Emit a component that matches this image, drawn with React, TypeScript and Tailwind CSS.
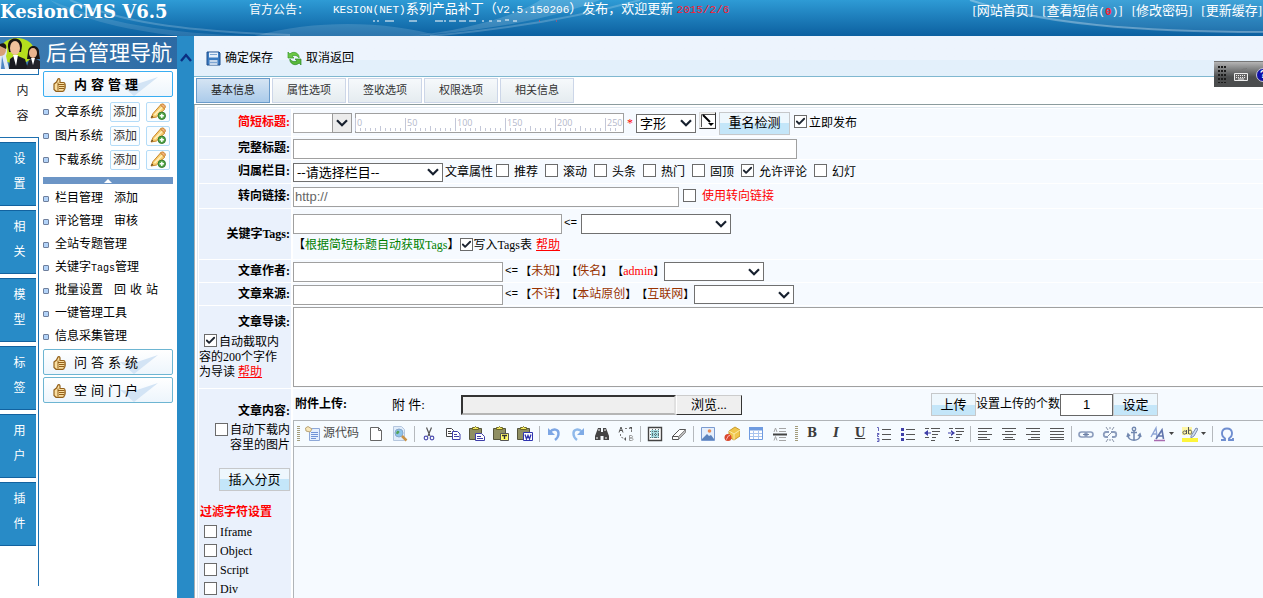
import { useState } from "react";
import type { ReactNode } from "react";
import { Check } from "lucide-react";

type MenuItem = {
  label: ReactNode;
  extra?: string;
};

const sideTabs = ["设置", "相关", "模型", "标签", "用户", "插件"];

const systems = ["文章系统", "图片系统", "下载系统"];

const menuItems: MenuItem[] = [
  { label: "栏目管理", extra: "添加" },
  { label: "评论管理", extra: "审核" },
  { label: "全站专题管理" },
  {
    label: (
      <>
        关键字<span className="font-['Liberation_Mono',monospace] text-[10px]">Tags</span>管理
      </>
    ),
  },
  { label: "批量设置", extra: "回 收 站" },
  { label: "一键管理工具" },
  { label: "信息采集管理" },
];

const formTabs = ["基本信息", "属性选项", "签收选项", "权限选项", "相关信息"];

const attributes = [
  { label: "推荐", checked: false },
  { label: "滚动", checked: false },
  { label: "头条", checked: false },
  { label: "热门", checked: false },
  { label: "固顶", checked: false },
  { label: "允许评论", checked: true },
  { label: "幻灯", checked: false },
];

const filters = ["Iframe", "Object", "Script", "Div"];

function Checkbox({ id, checked = false }: { id: string; checked?: boolean }) {
  return (
    <span className="relative mb-[3px] block h-[13px] w-[13px] shrink-0">
      <input
        id={id}
        type="checkbox"
        defaultChecked={checked}
        className="peer block h-[13px] w-[13px] appearance-none border border-[#6b6b6b] bg-white"
      />
      <Check
        strokeWidth={4}
        className="pointer-events-none absolute top-px left-px hidden h-[11px] w-[11px] text-[#1c2430] peer-checked:block"
      />
    </span>
  );
}

function Select({
  label,
  text = "",
  className,
  boxed = false,
}: {
  label: string;
  text?: string;
  className: string;
  boxed?: boolean;
}) {
  return (
    <span className={`relative block shrink-0 ${className}`}>
      <select
        aria-label={label}
        className={`block h-full w-full appearance-none border bg-white pl-[3px] text-[13px] leading-none ${
          boxed ? "border-[#a9a9a9]" : "border-[#707070]"
        }`}
      >
        <option>{text}</option>
      </select>
      <span
        className={`pointer-events-none absolute top-0 right-0 flex h-full w-5 items-center justify-center ${
          boxed ? "border border-[#9a9a9a] bg-[#ececec]" : ""
        }`}
      >
        <svg width="12" height="8" viewBox="0 0 12 8">
          <path d="M1 1.2 6 6.2 11 1.2" fill="none" stroke="#17202e" strokeWidth="2.2" />
        </svg>
      </span>
    </span>
  );
}

function PushButton({ children, className }: { children: ReactNode; className: string }) {
  return (
    <button
      type="button"
      className={`flex h-[23px] shrink-0 items-center justify-center border border-[#c6c8ca] bg-linear-to-b from-[#eef7fd] from-50% to-[#c4e6f9] to-50% pb-px text-[13px] leading-none ${className}`}
    >
      {children}
    </button>
  );
}

function FormRow({
  label,
  height,
  required = false,
  children,
}: {
  label: string;
  height: string;
  required?: boolean;
  children: ReactNode;
}) {
  return (
    <div className={`flex gap-[2px] border-t border-white ${height}`}>
      <div
        className={`flex w-[92px] shrink-0 items-center justify-end bg-[#eaf1fc] pr-px font-bold ${
          required ? "text-[#ff0000]" : ""
        }`}
      >
        {label}
      </div>
      <div className="flex min-w-0 flex-1 items-center bg-[#f6faff] pt-px">{children}</div>
    </div>
  );
}

function Arrow() {
  return <span className="mx-[2px] font-['Liberation_Mono',monospace] text-[11px]">{"<="}</span>;
}

function Choice({ children, red = false }: { children: string; red?: boolean }) {
  return (
    <span className="flex items-center whitespace-nowrap">
      <span className="text-[11px]">【</span>
      <a href="#" className={red ? "text-[#ff0000]" : "text-[#993300]"}>
        {children}
      </a>
      <span className="text-[11px]">】</span>
    </span>
  );
}

function Ruler() {
  const ticks = Array.from({ length: 53 }, (_, i) => i);
  return (
    <svg className="pointer-events-none absolute top-px left-0" width="268" height="18">
      {ticks.map((i) => {
        const top = i % 10 === 0 ? 4 : i % 5 === 0 ? 12 : 14;
        return <path key={i} d={`M${i * 5 + 0.5} ${top}V17`} stroke="#c3c7d8" />;
      })}
      {[0, 50, 100, 150, 200, 250].map((n) => (
        <text
          key={n}
          x={n + 2}
          y="12"
          fontSize="9"
          fontFamily="Open Sans, sans-serif"
          fill="#b4b8cb"
        >
          {n}
        </text>
      ))}
    </svg>
  );
}

function ThumbIcon() {
  return (
    <svg width="13" height="14" viewBox="0 0 13 14">
      <path
        d="M1 6 3.500 4 5 .9C6 .2 7 .8 7 2v2.500h3.500c1 0 1.500.8 1.300 1.600.6.500.6 1.400.1 1.900.5.500.5 1.400-.1 1.900.3.600.1 1.300-.5 1.700 0 1-.7 1.700-1.600 1.700H3L1 11.500Z"
        fill="#f9dea0"
        stroke="#93601a"
        strokeWidth="1.200"
      />
      <path d="M5 6.500h6.500M6 8.500h5.500M6 10.500h5M5 4.500v8" stroke="#93601a" />
    </svg>
  );
}

function PencilIcon() {
  return (
    <svg width="18" height="18" viewBox="0 0 18 18">
      <path d="M2 15 4 10.500 11.500 2 15.800 6 7.500 14Z" fill="#f8cf72" stroke="#c98528" />
      <path d="M5.500 12 13.500 4" stroke="#fff0bd" strokeWidth="1.600" />
      <path d="m11.500 2 1-1c1.900-.6 4.200 1.400 3.800 3.200l-1 1.500Z" fill="#f1b07e" stroke="#c98528" />
      <path d="M2 15 3 12.600 4.400 14Z" fill="#57401c" />
      <circle cx="12.800" cy="12.800" r="3.700" fill="#55a84a" stroke="#33782c" />
      <path d="M12.800 10.700v4.200M10.700 12.800h4.200" stroke="#fff" strokeWidth="1.400" />
    </svg>
  );
}

function Bullet() {
  return (
    <span className="mr-[6px] block h-[6px] w-[6px] shrink-0 rounded-[1px] border border-[#6f7f9c] bg-[#b3d3f8]" />
  );
}

function SpacedText({ text }: { text: string }) {
  return (
    <span className="flex gap-[4px]">
      {text.split(" ").map((char) => (
        <span key={char}>{char}</span>
      ))}
    </span>
  );
}

function NavButton({ children, active = false }: { children: string; active?: boolean }) {
  return (
    <button
      type="button"
      className={`relative flex h-[26px] w-full items-center rounded-[2px] border bg-linear-to-b from-white to-[#edf5fc] pl-[9px] text-[13px] ${
        active ? "border-[#3aaef2] font-bold" : "border-[#6db5d2]"
      }`}
    >
      <svg className="absolute top-[5px] right-[14px]" width="38" height="19" viewBox="0 0 38 19">
        <path d="M0 7 14 19 38 0 14 8Z" fill="#d3e4f5" />
      </svg>
      <span className="relative flex items-center gap-2 pt-px">
        <ThumbIcon />
        <SpacedText text={children} />
      </span>
    </button>
  );
}

function Sidebar() {
  return (
    <aside className="flex w-[177px] shrink-0 flex-col bg-white">
      <div className="flex h-[33px] shrink-0 items-center border-t border-white bg-linear-to-r from-[#3f7fb4] to-[#2c6aa4]">
        <svg width="40" height="32" viewBox="0 0 40 32" className="shrink-0">
          <ellipse cx="17" cy="14" rx="17" ry="13" fill="#b5df1d" />
          <path d="M0 9c5-3 9 3 6 10L9 32H0Z" fill="#dfe9f5" />
          <ellipse cx="1" cy="13" rx="5" ry="6" fill="#d8a078" />
          <path d="M0 7c5-2 7 1 6 5L0 9Z" fill="#201713" />
          <path d="m2 19 3 13H1Z" fill="#4f88c4" />
          <path d="M8 10C7-1 22-1 22 9l-1 6H9Z" fill="#1b1512" />
          <ellipse cx="15" cy="11" rx="5" ry="7" fill="#f0c09a" />
          <path d="M9 32 10 22l4-3h4l7 3 3 10Z" fill="#1a1a20" />
          <path d="m13 18 5 0-2 11Z" fill="#fff" />
          <path d="M28 15c0-8 12-8 11 1l1 6H27Z" fill="#1b1512" />
          <ellipse cx="33" cy="16" rx="4" ry="5" fill="#e8b48e" />
          <path d="m26 32 3-9 5-2 6 3v8Z" fill="#23232b" />
          <path d="m31 21 4 0-2 7Z" fill="#fff" />
        </svg>
        <h2 className="ml-[6px] text-[21px] leading-none whitespace-nowrap text-white">后台管理导航</h2>
      </div>

      <div className="flex min-h-0 flex-1">
        <div className="flex w-[39px] shrink-0 flex-col">
          <div className="h-[6px] shrink-0 border-r border-b border-[#1e70b0]" />
          <a href="#" className="flex h-[62px] shrink-0 flex-col items-center pt-1 pl-[6px] leading-[25px] text-[#222]">
            <span>内</span>
            <span>容</span>
          </a>
          <div className="mb-3 flex min-h-0 flex-1 flex-col gap-1 border-t border-r border-[#1e70b0] pt-1">
            {sideTabs.map((tab) => (
              <a
                key={tab}
                href="#"
                className="flex h-16 w-9 shrink-0 flex-col items-center border-y border-[#12629f] bg-[#288bc7] pt-1 pl-[3px] leading-[25px] text-white"
              >
                <span>{tab[0]}</span>
                <span>{tab[1]}</span>
              </a>
            ))}
          </div>
        </div>

        <nav className="min-w-0 flex-1 px-1 pt-[2px]">
          <NavButton active>内 容 管 理</NavButton>

          <div className="mt-[3px]">
            {systems.map((name) => (
              <div key={name} className="flex h-6 items-center">
                <Bullet />
                <a href="#" className="w-[55px] whitespace-nowrap">
                  {name}
                </a>
                <a
                  href="#"
                  className="flex h-5 w-[30px] items-center justify-center rounded-[2px] border border-[#b4dcf8] bg-[#fafdff] text-[#333]"
                >
                  添加
                </a>
                <a
                  href="#"
                  aria-label={name + "添加"}
                  className="ml-[6px] flex h-5 w-6 items-center justify-center rounded-[2px] border border-[#b4dcf8] bg-[#fafdff]"
                >
                  <PencilIcon />
                </a>
              </div>
            ))}
          </div>

          <div className="mt-[5px] flex h-[7px] items-center justify-center bg-[#6c95c6]">
            <svg width="8" height="4" viewBox="0 0 8 4">
              <path d="M0 4 4 0 8 4Z" fill="#fff" />
            </svg>
          </div>

          <ul className="mt-[3px] mb-px">
            {menuItems.map((item, index) => (
              <li key={index} className="flex h-[23px] items-center whitespace-nowrap">
                <Bullet />
                <a href="#">{item.label}</a>
                {item.extra && (
                  <a href="#" className="ml-[11px]">
                    <SpacedText text={item.extra} />
                  </a>
                )}
              </li>
            ))}
          </ul>

          <div className="flex flex-col gap-[2px]">
            <NavButton>问 答 系 统</NavButton>
            <NavButton>空 间 门 户</NavButton>
          </div>
        </nav>
      </div>
    </aside>
  );
}

function Header() {
  return (
    <header className="relative flex h-9 shrink-0 items-start overflow-hidden bg-linear-to-b from-[#2e9bd5] to-[#0c60a0] text-[13px] whitespace-nowrap text-white">
      <svg className="absolute top-0 left-0 h-full w-full" viewBox="0 0 1263 36" preserveAspectRatio="none">
        <path d="M50 0C100 22 170 34 255 36L180 36C120 30 70 16 50 0Z" fill="#fff" opacity=".12" />
        <path d="M70 0C120 22 180 31 290 35" fill="none" stroke="#fff" strokeWidth="2" opacity=".2" />
        <path d="M255 36C320 18 390 22 440 36Z" fill="#fff" opacity=".14" />
        <path d="M410 36C500 30 560 16 600 0L540 0C520 14 470 30 410 36Z" fill="#fff" opacity=".16" />
        <path d="M430 36C520 28 590 14 640 0" fill="none" stroke="#fff" strokeWidth="2" opacity=".2" />
        <path d="M970 0C1030 20 1110 32 1263 32V0Z" fill="#fff" opacity=".08" />
        <path d="M970 0C1040 24 1140 32 1263 32" fill="none" stroke="#fff" strokeWidth="2" opacity=".3" />
      </svg>
      <h1 className="relative w-[249px] font-['DejaVu_Serif',serif] text-[18px] leading-6 font-bold">
        KesionCMS V6.5
      </h1>
      <span className="relative w-[84px] text-[12px] leading-[20px]">官方公告：</span>
      <div className="relative">
        <p className="leading-[18px]">
          <span className="font-['Liberation_Mono',monospace] text-[11px]">KESION(NET)</span>
          系列产品补丁（
          <span className="font-['Liberation_Mono',monospace] text-[11px]">V2.5.150206</span>
          ）发布，欢迎更新{" "}
          <span className="font-['Liberation_Mono',monospace] text-[11px] text-[#ff1a2e]">2015/2/6</span>
        </p>
        {/* next announcement scrolling in */}
        <svg width="190" height="3" className="ml-[38px] block">
          <path
            d="M2 2h2M6 2h2M14 2h9M38 2h8M64 2h8M74 1v2M78 2h7M88 2h7M98 2h7M112 1v2M118 2h3M126 2h4M134 1h4M142 2h4"
            stroke="#fff"
          />
          <path d="M168 2h1M185 2h1" stroke="#ff4050" />
        </svg>
      </div>
      <nav className="relative ml-auto flex gap-[9px] pr-px leading-[21px]">
        <a href="#">[网站首页]</a>
        <a href="#">
          [查看短信<span className="font-['Liberation_Mono',monospace] text-[11px]">(</span>
          <b className="font-['Liberation_Mono',monospace] text-[11px] text-[#ff1a2e]">0</b>
          <span className="font-['Liberation_Mono',monospace] text-[11px]">)</span>]
        </a>
        <a href="#">[修改密码]</a>
        <a href="#">[更新缓存]</a>
      </nav>
    </header>
  );
}

function Tool({ label, children, wide = false }: { label: string; children: ReactNode; wide?: boolean }) {
  return (
    <button
      type="button"
      aria-label={label}
      className={`flex h-6 shrink-0 items-center justify-center ${wide ? "w-8 gap-[3px]" : "w-6"}`}
    >
      <svg width="16" height="16" viewBox="0 0 16 16" fill="none">
        {children}
      </svg>
      {wide && (
        <svg width="5" height="3" viewBox="0 0 5 3">
          <path d="M0 0h5L2.5 3Z" fill="#444" />
        </svg>
      )}
    </button>
  );
}

function Separator() {
  return (
    <span className="flex w-[5px] shrink-0 justify-center">
      <span className="block h-4 w-px bg-[#b5b9bd]" />
    </span>
  );
}

function Grip() {
  return (
    <span className="flex w-2 shrink-0 justify-center">
      <svg width="3" height="15" viewBox="0 0 3 15">
        <path d="M1.5 0V15" stroke="#a39c7c" strokeWidth="3" strokeDasharray="1 1" />
      </svg>
    </span>
  );
}

function Clipboard() {
  return (
    <>
      <path d="M.5 2.5h12v11H.5Z" fill="#8f8f63" stroke="#55553c" />
      <path d="M3.5 3.5v-2h2l1-1 1 1h2v2Z" fill="#f3e95d" stroke="#6b6622" />
    </>
  );
}

function EditorToolbar() {
  return (
    <div className="flex h-[26px] items-center overflow-hidden border-b border-[#b0b4b8] bg-[#f6fbff]">
      <Grip />
      <button type="button" className="flex w-[62px] shrink-0 items-center gap-[2px] pl-[3px] text-[#4a4a4a]">
        <svg width="16" height="16" viewBox="0 0 16 16" fill="none" className="shrink-0">
          <path d="M4.500 2.500h10v12h-10Z" fill="#e4efff" stroke="#8ea8d8" />
          <path d="M6 6.500h7M6 8.500h7M6 10.500h7M6 12.500h5" stroke="#6f92d6" />
          <path d="M.5 2 3 .5l4 2.500-2 3-4-1Z" fill="#f8e7bb" stroke="#b9a477" />
        </svg>
        <span className="whitespace-nowrap">源代码</span>
      </button>
      <Tool label="新建">
        <path d="M2.500 1.500h8l3 3v10h-11Z" fill="#fff" stroke="#666" />
        <path d="M10.500 1.500v3h3" stroke="#666" />
      </Tool>
      <Tool label="预览">
        <path d="M1.500.5h8l3 3v11h-11Z" fill="#e0ecfa" stroke="#b4c6de" />
        <circle cx="7" cy="7" r="4" fill="#8fc4ea" stroke="#86a8cc" />
        <path d="M5 5c2-1 3 1 2 2s-2 2-3 0Z" fill="#54a35a" />
        <path d="m10 10 4.500 4.500" stroke="#c99347" strokeWidth="2.500" />
      </Tool>
      <Separator />
      <Tool label="剪切">
        <path d="M5.500 1.500 9 10M10.500 1.500 7 10" stroke="#555" strokeWidth="1.200" />
        <circle cx="5" cy="12" r="1.800" stroke="#4f4fb0" strokeWidth="1.200" />
        <circle cx="11" cy="12" r="1.800" stroke="#4f4fb0" strokeWidth="1.200" />
      </Tool>
      <Tool label="复制">
        <path d="M1.500 2.500h5l2 2v6h-7Z" fill="#fff" stroke="#444" />
        <path d="M3 5.500h3M3 7.500h4" stroke="#444" />
        <path d="M7.500 5.500h5l2.500 2.500v5.500H7.500Z" fill="#fff" stroke="#3f3fa8" />
        <path d="M9 8.500h3M9 10.500h5" stroke="#3f3fa8" />
      </Tool>
      <Tool label="粘贴">
        <Clipboard />
        <path d="M6.500 7.500h6l3 3v4h-9Z" fill="#fff" stroke="#3f3fa8" />
        <path d="M8 10.500h4M8 12.500h6" stroke="#3f3fa8" />
      </Tool>
      <Tool label="粘贴为无格式文本">
        <Clipboard />
        <path d="M7.500 7.500h8v7h-8Z" fill="#fff96a" stroke="#555" />
        <path d="M9 9.500h5M11.500 9v4" stroke="#333" strokeWidth="1.400" />
      </Tool>
      <Tool label="从 Word 粘贴">
        <Clipboard />
        <path d="M6.500 6.500h9v8h-9Z" fill="#fff" stroke="#2f35b0" />
        <path d="m8 8.500 1.500 4.500L11 9.500l1.500 3.500L14 8.500" stroke="#2f35b0" strokeWidth="1.300" />
      </Tool>
      <Separator />
      <Tool label="撤销">
        <path d="M4 6C7 2 13 3 12.500 8c0 2-1 4-3.500 6" stroke="#7da6e4" strokeWidth="2.400" />
        <path d="M2 2v7h7Z" fill="#7da6e4" />
      </Tool>
      <Tool label="重做">
        <path d="M12 6C9 2 3 3 3.500 8c0 2 1 4 3.500 6" stroke="#8fb9ea" strokeWidth="2.400" />
        <path d="M14 2v7H7Z" fill="#7fabe6" />
      </Tool>
      <Tool label="查找">
        <path d="M4 2h3v4h2V2h3l3 8v4h-5.500v-4h-3v4H1v-4Z" fill="#444" />
        <path d="M3 11v2M12 11v2M5 3v2M11 3v2" stroke="#fff" />
      </Tool>
      <Tool label="替换">
        <path d="M1 6.500 3 1l2 5.500M1.800 4.500h2.400" stroke="#555" />
        <path d="M11.500 9.500v5h2c2 0 2-2.500 0-2.500h-2 1.500c2 0 2-2.500 0-2.500Z" stroke="#999" />
        <path d="M7 2.500h5M13.500 4v4M2.500 8v3l5 2" stroke="#777" strokeDasharray="2 2" />
        <path d="M11 1h3v3ZM8 11v4l-2-2Z" fill="#555" />
      </Tool>
      <Separator />
      <Tool label="全选">
        <path d="M1.500 1.500h13v13h-13Z" fill="#fff" stroke="#444" strokeWidth="1.400" />
        <path d="M4 4h8v8H4Z" fill="#a5dbe0" />
        <path d="M3 5.500h10M3 8.500h10M3 11.500h10M5.500 3v10M8.500 3v10M11.500 3v10" stroke="#5b7378" strokeDasharray="1 1" />
      </Tool>
      <Tool label="清除格式">
        <path d="m1.500 10.500 7-7h6v3l-7 7h-6Z" fill="#fff" stroke="#555" />
        <path d="m1.500 10.500h6l7-7M7.500 10.500v3" stroke="#555" />
        <path d="M7.500 10.500l7-7v3l-7 7Z" fill="#bbb" />
      </Tool>
      <Separator />
      <Tool label="图像">
        <path d="M1.500 1.500h13v13h-13Z" fill="#e5effc" stroke="#7b9bd0" />
        <path d="m2 13 5-5 2 2 2-1 3 4v1H2Z" fill="#5b83bd" />
        <circle cx="9.500" cy="5" r="1.800" fill="#e98a55" />
      </Tool>
      <Tool label="Flash">
        <path d="m5 5 6-4 5 3v6l-6 4-5-3Z" fill="#f0c64c" stroke="#c99a2c" />
        <path d="m5 5 5 3 6-4M10 8v6" stroke="#fbe9a6" />
        <circle cx="4" cy="11.500" r="3.500" fill="#d9472c" />
        <path d="M6 9.500C3 9 4 13 2 13.500" stroke="#fbb" />
      </Tool>
      <Tool label="表格">
        <path d="M1.500 1.500h13v12h-13Z" fill="#fff" stroke="#6f9be0" />
        <path d="M1 1h14v3.500H1Z" fill="#6f9be0" />
        <path d="M2 7.500h12M2 10.500h12M5.500 5v8M10.500 5v8" stroke="#a9c4ee" />
      </Tool>
      <Tool label="水平线">
        <path d="M1 8.500h14" stroke="#444" strokeWidth="2" />
        <path d="m2 6 1.500-4L5 6M2 14.500l1.500-4 1.500 4M7 2.500h7M7 5.500h7M7 11.500h7M7 14.500h7" stroke="#a5a5a5" />
      </Tool>
      <Grip />
      <button type="button" aria-label="加粗" className="w-6 shrink-0 font-['DejaVu_Serif',serif] text-[12px] font-bold text-[#3c3c3c]">
        B
      </button>
      <button type="button" aria-label="倾斜" className="w-6 shrink-0 font-['DejaVu_Serif',serif] text-[12px] font-bold text-[#3c3c3c] italic">
        I
      </button>
      <button type="button" aria-label="下划线" className="w-6 shrink-0 font-['DejaVu_Serif',serif] text-[12px] font-bold text-[#3c3c3c] underline">
        U
      </button>
      <Tool label="编号列表">
        <path d="M6 3.500h9M6 8.500h9M6 13.500h9" stroke="#555" />
        <path d="M1 1.500h1.500V5M1 7.500h2v1H1.500v2H3M1 12.500h2v3H1M1.500 14H3" stroke="#6464bb" />
      </Tool>
      <Tool label="项目列表">
        <path d="M6 3.500h9M6 8.500h9M6 13.500h9" stroke="#555" />
        <path d="M1 2h3v3H1ZM1 7h3v3H1ZM1 12h3v3H1Z" fill="#3f3fa8" />
      </Tool>
      <Tool label="减少缩进">
        <path d="M7 2.500h9M8 5.500h8M8 8.500h6M8 11.500h4M7 14.500h4M1 2.500h4M1 11.500h4" stroke="#555" strokeWidth="1.200" />
        <path d="M4 4v6L0 7ZM3 6.400h4v1.200H3Z" fill="#3f3fa8" />
      </Tool>
      <Tool label="增加缩进">
        <path d="M7 2.500h9M8 5.500h8M8 8.500h6M8 11.500h4M7 14.500h4M1 2.500h4M1 11.500h4" stroke="#555" strokeWidth="1.200" />
        <path d="M3 4v6l4-3ZM0 6.400h4v1.200H0Z" fill="#3f3fa8" />
      </Tool>
      <Separator />
      <Tool label="左对齐">
        <path d="M1 2.500h14M1 5.500h9M1 8.500h14M1 11.500h9M1 13.500h12" stroke="#555" />
      </Tool>
      <Tool label="居中">
        <path d="M1 2.500h14M4 5.500h8M1 8.500h14M4 11.500h8M2 13.500h12" stroke="#555" />
      </Tool>
      <Tool label="右对齐">
        <path d="M1 2.500h14M6 5.500h9M1 8.500h14M6 11.500h9M3 13.500h12" stroke="#555" />
      </Tool>
      <Tool label="两端对齐">
        <path d="M1 2.500h14M1 5.500h14M1 8.500h14M1 11.500h14M1 13.500h14" stroke="#555" />
      </Tool>
      <Separator />
      <Tool label="超链接">
        <rect x="1" y="6" width="8" height="5" rx="2.500" stroke="#8c9dbd" strokeWidth="1.600" />
        <rect x="7" y="6" width="8" height="5" rx="2.500" stroke="#8c9dbd" strokeWidth="1.600" />
        <path d="M5 8.500h6" stroke="#6f82a6" />
      </Tool>
      <Tool label="取消超链接">
        <path d="M7 6H4C1 6 1 11 4 11h2M9 6h3c3 0 3 5 0 5h-2" stroke="#8c9dbd" strokeWidth="1.800" />
        <path d="m4 1 2 3M12 1l-2 3M8 1v2M4 16l2-3M12 16l-2-3M8 15v-2M6 10l4-4" stroke="#8a94a8" />
      </Tool>
      <Tool label="锚点">
        <circle cx="8" cy="3" r="1.700" stroke="#7288b0" strokeWidth="1.400" />
        <path d="M8 5v9M5 6.500h6M2 9c0 7 12 7 12 0M1 11l1-3 2 2M15 11l-1-3-2 2" stroke="#7288b0" strokeWidth="1.500" />
      </Tool>
      <Tool label="文本颜色" wide>
        <path d="m1 11 5-9 1 9M3 8h4" stroke="#8fa6d6" strokeWidth="1.400" />
        <path d="m6 13 6-9 1.500 9M8.500 10H13" stroke="#6175ad" strokeWidth="1.600" />
        <path d="M4 14.500h11" stroke="#a96bb0" strokeWidth="1.500" />
      </Tool>
      <Tool label="背景颜色" wide>
        <path d="M0 1h10v8H0Z" fill="#fdf6a6" />
        <path d="M4.500 4v4M4.500 6C3 4 .5 5 1 7s3 1 3.500-.5M6.500 1v7M6.500 5c2-2 4 0 3 2s-2 1-3 0" stroke="#555" />
        <path d="m9 10 5-8 2 1-4 7-3 2Z" fill="#cfdcf1" stroke="#7c8db0" />
        <path d="M0 12h16v4H0Z" fill="#fdf53c" />
      </Tool>
      <Separator />
      <Tool label="特殊符号">
        <path d="M2 14h4v-1.500C1.500 9.500 2 2.500 8 2.500s6.500 7 2 10V14h4v-2" stroke="#6f8ed0" strokeWidth="1.900" />
      </Tool>
    </div>
  );
}

function ArticleForm() {
  return (
    <form className="flex min-h-0 flex-1 flex-col border-l border-[#a8b0b4] bg-white">
      <div className="mt-[2px] ml-[2px] flex min-h-0 flex-1 flex-col border-t border-l border-[#dfe8f0] pl-px">
        <FormRow label="简短标题:" height="h-[28px] shrink-0" required>
          <Select label="标题前缀" className="h-5 w-[59px]" boxed />
          <span className="relative ml-[3px] block">
            <input aria-label="简短标题" className="block h-5 w-[269px] border border-[#a0a0a0] bg-white px-1" />
            <Ruler />
          </span>
          <span className="mx-[3px] text-[#ff0000]">*</span>
          <Select label="字形" text="字形" className="h-[19px] w-[60px]" />
          <button
            type="button"
            aria-label="标题颜色"
            className="mx-[3px] mb-[6px] flex h-[17px] w-[17px] items-center justify-center border border-t-[#ddd] border-r-[#333] border-b-[#333] border-l-[#ddd] bg-[#f4f2ee]"
          >
            <svg width="14" height="13" viewBox="0 0 14 13">
              <path d="M0 0h14v13H0Z" fill="#fff" />
              <path d="M.5 13V.5H14" fill="none" stroke="#555" />
              <path d="m2 1 7 7" stroke="#000" strokeWidth="2" />
              <path d="M7 9h6l-3 3Z" fill="#000" />
            </svg>
          </button>
          <PushButton className="w-[71px]">重名检测</PushButton>
          <span className="ml-1 flex items-center gap-[2px]">
            <Checkbox id="publish" checked />
            <label htmlFor="publish">立即发布</label>
          </span>
        </FormRow>

        <FormRow label="完整标题:" height="h-[23px] shrink-0">
          <input aria-label="完整标题" className="h-5 w-[504px] border border-[#a0a0a0] bg-white px-1" />
        </FormRow>

        <FormRow label="归属栏目:" height="h-[24px] shrink-0">
          <Select label="归属栏目" text="--请选择栏目--" className="h-[19px] w-[150px]" />
          <span className="mr-[3px] ml-[2px] whitespace-nowrap">文章属性</span>
          <div className="flex gap-[7px]">
            {attributes.map((item) => (
              <span key={item.label} className="flex items-center gap-[5px]">
                <Checkbox id={item.label} checked={item.checked} />
                <label htmlFor={item.label} className="whitespace-nowrap">
                  {item.label}
                </label>
              </span>
            ))}
          </div>
        </FormRow>

        <FormRow label="转向链接:" height="h-[25px] shrink-0">
          <input
            aria-label="转向链接"
            defaultValue="http://"
            className="h-5 w-[386px] border border-[#a0a0a0] bg-white px-px font-['Liberation_Sans',sans-serif] text-[13px] text-[#666]"
          />
          <span className="ml-1 flex items-center gap-[6px] text-[#ff0000]">
            <Checkbox id="redirect" />
            <label htmlFor="redirect">使用转向链接</label>
          </span>
        </FormRow>

        <FormRow label="关键字Tags:" height="h-[51px] shrink-0">
          <div className="flex flex-col gap-[2px]">
            <div className="flex items-center">
              <input aria-label="关键字Tags" className="h-5 w-[269px] border border-[#a0a0a0] bg-white px-1" />
              <Arrow />
              <Select label="常用Tags" className="ml-[2px] h-5 w-[150px]" />
            </div>
            <div className="flex h-5 items-center">
              <span>
                【
                <a href="#" className="text-[#008000]">
                  根据简短标题自动获取Tags
                </a>
                】
              </span>
              <span className="mr-1 flex items-center gap-px">
                <Checkbox id="writeTags" checked />
                <label htmlFor="writeTags">写入Tags表</label>
              </span>
              <a href="#" className="text-[#ff0000] underline">
                帮助
              </a>
            </div>
          </div>
        </FormRow>

        <FormRow label="文章作者:" height="h-[23px] shrink-0">
          <input aria-label="文章作者" className="h-5 w-[210px] border border-[#a0a0a0] bg-white px-1" />
          <Arrow />
          <Choice>未知</Choice>
          <Choice>佚名</Choice>
          <Choice red>admin</Choice>
          <Select label="选择作者" className="h-[19px] w-[100px]" />
        </FormRow>

        <FormRow label="文章来源:" height="h-[23px] shrink-0">
          <input aria-label="文章来源" className="h-5 w-[210px] border border-[#a0a0a0] bg-white px-1" />
          <Arrow />
          <Choice>不详</Choice>
          <Choice>本站原创</Choice>
          <Choice>互联网</Choice>
          <Select label="选择来源" className="h-[19px] w-[100px]" />
        </FormRow>

        {/* Summary */}
        <div className="flex h-[83px] shrink-0 gap-[2px] border-t border-white">
          <div className="w-[92px] shrink-0 bg-[#eaf1fc] pt-[9px] leading-[15px]">
            <p className="mb-1 pr-px text-right font-bold">文章导读:</p>
            <span className="flex items-center gap-[2px] pl-[5px] whitespace-nowrap">
              <Checkbox id="autoIntro" checked />
              <label htmlFor="autoIntro">自动截取内</label>
            </span>
            <p className="whitespace-nowrap">容的200个字作</p>
            <p>
              为导读{" "}
              <a href="#" className="text-[#ff0000] underline">
                帮助
              </a>
            </p>
          </div>
          <div className="flex min-w-0 flex-1 bg-[#f6faff] py-px">
            <textarea
              aria-label="文章导读"
              className="block h-20 w-full resize-none border border-r-0 border-[#a0a0a0] bg-white p-1"
            />
          </div>
        </div>

        {/* Content */}
        <div className="flex min-h-0 flex-1 gap-[2px] border-t border-white">
          <div className="w-[92px] shrink-0 bg-[#eaf1fc] pt-[15px] leading-[15px]">
            <p className="pr-px text-right font-bold">文章内容:</p>
            <div className="mt-1 flex items-start justify-end gap-[2px] pr-px">
              <Checkbox id="autoDownload" />
              <label htmlFor="autoDownload" className="whitespace-nowrap">
                自动下载内
                <br />
                容里的图片
              </label>
            </div>
            <PushButton className="mt-[15px] ml-5 w-[71px]">插入分页</PushButton>
            <p className="mt-[14px] mb-[3px] pl-px font-bold whitespace-nowrap text-[#ff0000]">过滤字符设置</p>
            {filters.map((name) => (
              <span key={name} className="flex h-[19px] items-center gap-[3px] pl-[5px]">
                <Checkbox id={name} />
                <label htmlFor={name}>{name}</label>
              </span>
            ))}
          </div>

          <div className="flex min-w-0 flex-1 flex-col bg-[#f6faff]">
            <div className="flex h-[31px] shrink-0 items-center">
              <span className="w-[99px] pl-[2px] font-bold whitespace-nowrap">附件上传:</span>
              <span className="w-[69px] text-[13px] whitespace-nowrap">附 件:</span>
              <input
                aria-label="附件"
                readOnly
                className="h-5 w-[215px] border-2 border-t-[#333] border-r-[#e0e0e0] border-b-[#b5b5b5] border-l-[#333] bg-[#efefef]"
              />
              <button
                type="button"
                className="flex h-5 w-[66px] items-center justify-center border border-t-[#ccc] border-r-[#333] border-b-[#333] border-l-[#fff] bg-[#efefef] text-[13px]"
              >
                浏览...
              </button>
              <div className="mr-[105px] ml-auto flex items-center">
                <PushButton className="w-[45px]">上传</PushButton>
                <label htmlFor="uploadCount" className="whitespace-nowrap">
                  设置上传的个数
                </label>
                <input
                  id="uploadCount"
                  defaultValue="1"
                  className="h-[22px] w-[53px] border border-[#666] bg-white text-center font-['Liberation_Sans',sans-serif] text-[13px]"
                />
                <PushButton className="w-[45px]">设定</PushButton>
              </div>
            </div>
            <div className="flex min-h-0 flex-1 flex-col border-t border-l border-[#b0b4b8]">
              <EditorToolbar />
              <textarea aria-label="文章内容" className="block w-full flex-1 resize-none bg-[#f6faff] p-2" />
            </div>
          </div>
        </div>
      </div>
    </form>
  );
}

export default function App() {
  const [activeTab, setActiveTab] = useState(0);

  return (
    <div className="flex h-screen flex-col overflow-hidden bg-white font-['Liberation_Serif','Noto_Sans_CJK_SC',serif] text-[12px] leading-[15px] text-black">
      <Header />
      <div className="flex min-h-0 flex-1">
        <Sidebar />
        <button type="button" aria-label="收起导航" className="flex w-[17px] shrink-0 justify-center bg-[#288bc7] pt-[17px]">
          <svg width="12" height="9" viewBox="0 0 12 9">
            <path d="M1 8 6 2l5 6" fill="none" stroke="#0b2f82" strokeWidth="2.400" />
          </svg>
        </button>

        <main className="relative flex min-w-0 flex-1 flex-col">
          <div className="flex h-[41px] shrink-0 items-center gap-[14px] border-b border-[#80b8d0] bg-linear-to-b from-[#edf4fd] from-60% to-[#e3f0fb] to-60% pt-1 pl-3">
            <button type="button" className="flex items-center gap-1">
              <svg width="15" height="15" viewBox="0 0 15 15">
                <path d="M1 1h12l1 1v12H1Z" fill="#3b7cc2" stroke="#1f4f8c" />
                <path d="M3 1.500h9v5H3Z" fill="#e8f1fb" />
                <path d="M3.500 9h8v5h-8Z" fill="#c4d6ea" />
                <path d="M4 3.500h7M4 11.500h7" stroke="#7da6d3" />
              </svg>
              <span>确定保存</span>
            </button>
            <button type="button" className="flex items-center gap-1">
              <svg width="15" height="15" viewBox="0 0 15 15">
                <path d="M1 1v6h6L5 5.200C8 3.500 11 5 12 7c1-4-5-8-9.200-4Z" fill="#6cc644" stroke="#369a2c" strokeWidth=".7" />
                <path d="M14 14V8H8l2 1.800C7 11.500 4 10 3 8c-1 4 5 8 9.200 4Z" fill="#58b83a" stroke="#2e8a28" strokeWidth=".7" />
              </svg>
              <span>取消返回</span>
            </button>
          </div>

          <div className="flex h-[28px] shrink-0 gap-[2px] border-b border-[#8c9c9e] bg-white pt-px pl-[2px]">
            {formTabs.map((tab, index) => (
              <button
                key={tab}
                type="button"
                onClick={() => setActiveTab(index)}
                className={`flex h-[25px] w-[74px] items-center justify-center border text-[11px] ${
                  index === activeTab
                    ? "border-[#6a9bcb] bg-linear-to-b from-[#d5e4f3] to-[#abcbea] text-[#222]"
                    : "border-[#ccd6e8] bg-linear-to-b from-[#f6f9fb] to-[#e5ecf0] text-[#333]"
                }`}
              >
                {tab}
              </button>
            ))}
          </div>

          <ArticleForm />

          {/* Floating input method bar */}
          <div className="absolute top-[25px] right-0 flex h-[26px] w-[49px] items-center gap-2 overflow-hidden border-t border-[#777] bg-linear-to-b from-[#b5b5b5] to-[#4b4d4e] to-60% pl-1">
            <svg width="8" height="17" viewBox="0 0 8 17" className="shrink-0">
              <path d="M1 0v17M4 0v17M7 0v17" stroke="#1c1c1c" strokeWidth="2" strokeDasharray="2 2" />
            </svg>
            <svg width="14" height="13" viewBox="0 0 14 13" className="shrink-0">
              <path d="M3 4c1-3 3 0 5-2s3 0 5-2" fill="none" stroke="#777" />
              <path d="M.5 5.500h13v7H.5Z" fill="#666" stroke="#eee" />
              <path d="M2 7.500h10M2 9.500h10" stroke="#eee" strokeDasharray="1 1" />
              <path d="M4 11h6" stroke="#eee" />
            </svg>
            <span className="flex h-[14px] w-[14px] shrink-0 items-center justify-center rounded-full border border-[#c5c5d5] bg-[#1010a8] font-['Liberation_Sans',sans-serif] text-[11px] font-bold text-white">
              ?
            </span>
          </div>
        </main>
      </div>
    </div>
  );
}
